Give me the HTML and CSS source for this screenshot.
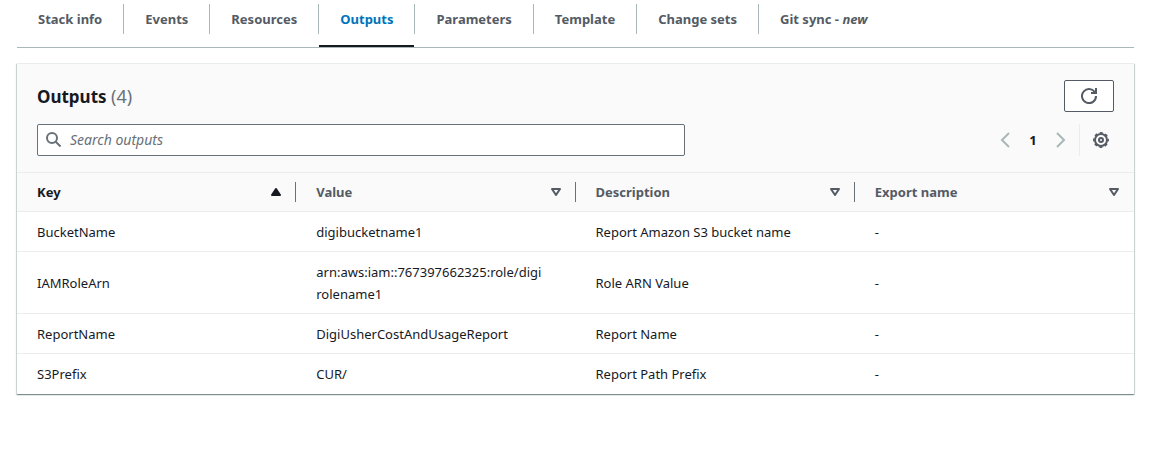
FILE: index.html
```html
<!DOCTYPE html>
<html lang="en">
<head>
<meta charset="utf-8">
<meta name="viewport" content="width=device-width, initial-scale=1">
<title>Stack outputs</title>
<link rel="stylesheet" href="styles.css">
</head>
<body>
<main class="page">
  <nav class="tabs" aria-label="Stack sections">
    <div class="tab"><a class="tab-link" href="#info">Stack info</a></div>
    <div class="tab"><a class="tab-link" href="#events">Events</a></div>
    <div class="tab"><a class="tab-link" href="#resources">Resources</a></div>
    <div class="tab tab-active"><a class="tab-link" href="#outputs" aria-current="page">Outputs</a></div>
    <div class="tab"><a class="tab-link" href="#parameters">Parameters</a></div>
    <div class="tab"><a class="tab-link" href="#template">Template</a></div>
    <div class="tab"><a class="tab-link" href="#changesets">Change sets</a></div>
    <div class="tab"><a class="tab-link" href="#gitsync">Git sync - <em>new</em></a></div>
  </nav>

  <section class="panel" id="outputs">
    <header class="panel-header">
      <div class="title-row">
        <h2 class="title">Outputs <span class="count">(4)</span></h2>
        <button class="refresh" type="button" aria-label="Refresh">
          <svg class="icon" viewBox="0 0 16 16"><path d="M10 5h5V0M15 8a7 7 0 1 1-.7-3"/></svg>
        </button>
      </div>
      <div class="tools-row">
        <label class="search">
          <svg class="icon search-icon" viewBox="0 0 16 16"><circle cx="6" cy="6" r="5"/><path d="M9.500 9.500l5 5"/></svg>
          <input class="search-input" type="search" placeholder="Search outputs" aria-label="Search outputs">
        </label>
        <div class="tools">
          <div class="pager">
            <button class="icon-button pager-arrow" type="button" aria-label="Previous page"><svg class="icon" viewBox="0 0 16 16"><path d="M12 1L5 8l7 7"/></svg></button>
            <button class="page-number" type="button" aria-current="page">1</button>
            <button class="icon-button pager-arrow" type="button" aria-label="Next page"><svg class="icon" viewBox="0 0 16 16"><path d="M4 1l7 7-7 7"/></svg></button>
          </div>
          <div class="settings">
            <button class="icon-button" type="button" aria-label="Preferences"><svg class="icon" viewBox="0 0 16 16"><circle cx="8" cy="8" r="6"/><circle class="teeth" cx="8" cy="8" r="7.200"/><circle cx="8" cy="8" r="2"/></svg></button>
          </div>
        </div>
      </div>
    </header>

    <table class="table">
      <thead>
        <tr>
          <th class="sorted" scope="col" aria-sort="ascending"><div class="head-cell">Key<svg class="sort" viewBox="0 0 10 8"><path class="solid" d="M5 1l4 6H1z"/></svg></div></th>
          <th scope="col"><div class="head-cell">Value<svg class="sort" viewBox="0 0 10 8"><path d="M1 1h8L5 7z"/></svg></div></th>
          <th scope="col"><div class="head-cell">Description<svg class="sort" viewBox="0 0 10 8"><path d="M1 1h8L5 7z"/></svg></div></th>
          <th scope="col"><div class="head-cell">Export name<svg class="sort" viewBox="0 0 10 8"><path d="M1 1h8L5 7z"/></svg></div></th>
        </tr>
      </thead>
      <tbody>
        <tr><td>BucketName</td><td>digibucketname1</td><td>Report Amazon S3 bucket name</td><td>-</td></tr>
        <tr><td>IAMRoleArn</td><td>arn:aws:iam::767397662325:role/digi<wbr>rolename1</td><td>Role ARN Value</td><td>-</td></tr>
        <tr><td>ReportName</td><td>DigiUsherCostAndUsageReport</td><td>Report Name</td><td>-</td></tr>
        <tr><td>S3Prefix</td><td>CUR/</td><td>Report Path Prefix</td><td>-</td></tr>
      </tbody>
    </table>
  </section>
</main>
</body>
</html>
```
FILE: styles.css
```css
* { box-sizing: border-box; }

body {
  margin: 0;
  background: #fff;
  color: #16191f;
  font: 13px/22px "Noto Sans", "Open Sans", sans-serif;
}

button, input { font: inherit; }

.page { padding: 0 26px 24px 17px; }

.tabs {
  display: flex;
  border-bottom: 1px solid #aab7b8;
  padding-top: 4px;
  margin-bottom: 15px;
}

.tab {
  display: flex;
  flex-direction: column;
  position: relative;
  padding-bottom: 13px;
}

.tab-link {
  padding: 4px 21px;
  border-right: 1px solid #aab7b8;
  color: #545b64;
  font-weight: 700;
  text-decoration: none;
  white-space: nowrap;
}

.tab:last-child .tab-link { border-right: 0; }
.tab-active .tab-link { color: #0073bb; }

.tab-active::after {
  content: "";
  position: absolute;
  right: 1px;
  bottom: 0;
  left: 0;
  height: 2px;
  background: #16191f;
}

.panel {
  border-top: 1px solid #eaeded;
  background: #fff;
  box-shadow: 0 1px 1px 0 rgba(0, 28, 36, .3), 1px 1px 1px 0 rgba(0, 28, 36, .15), -1px 1px 1px 0 rgba(0, 28, 36, .15);
}

.panel-header {
  display: flex;
  flex-direction: column;
  gap: 12px;
  padding: 16px 20px;
  background: #fafafa;
}

.title-row, .tools-row {
  display: flex;
  align-items: center;
  justify-content: space-between;
  gap: 20px;
}

.title { margin: 0; font-size: 17px; font-weight: 700; }
.count { color: #687078; font-size: 18px; font-weight: 400; }

.icon {
  display: block;
  width: 16px;
  height: 16px;
  fill: none;
  stroke: currentColor;
  stroke-width: 2;
}

.refresh {
  display: grid;
  place-items: center;
  width: 50px;
  height: 32px;
  padding: 0;
  border: 1px solid #545b64;
  border-radius: 2px;
  background: #fff;
  color: #545b64;
}

.search {
  display: flex;
  flex: 1;
  align-items: center;
  gap: 8px;
  max-width: 648px;
  height: 32px;
  padding: 0 8px;
  border: 1px solid #687078;
  border-radius: 2px;
  background: #fff;
  color: #687078;
}

.search-input {
  flex: 1;
  min-width: 0;
  padding: 0;
  border: 0;
  outline: 0;
  background: none;
  color: #16191f;
  font-size: 14px;
}

.search-input::placeholder { color: #687078; font-style: italic; opacity: 1; }

.tools, .pager { display: flex; align-items: center; }
.tools { gap: 10px; }

.icon-button, .page-number {
  padding: 0;
  border: 0;
  background: none;
  color: #545b64;
}

.pager-arrow { color: #aab7b8; }
.page-number { width: 40px; color: #16191f; font-weight: 700; }

.settings {
  display: flex;
  align-items: center;
  height: 32px;
  padding: 0 5px 0 13px;
  border-left: 1px solid #eaeded;
}

.teeth { stroke-width: 1.500; stroke-dasharray: 3 2.655; stroke-dashoffset: 1.500; }

.table {
  width: 100%;
  border-collapse: separate;
  border-spacing: 0;
  table-layout: fixed;
}

th {
  padding: 9px 0;
  border-top: 1px solid #eaeded;
  border-bottom: 1px solid #eaeded;
  background: #fafafa;
  color: #545b64;
  text-align: left;
}

.sorted { color: #16191f; }

.head-cell {
  display: flex;
  align-items: center;
  justify-content: space-between;
  height: 20px;
  padding: 0 14px 0 20px;
  border-right: 1px solid #687078;
}

th:last-child .head-cell { border-right-color: transparent; }

.sort {
  width: 10px;
  height: 8px;
  fill: none;
  stroke: currentColor;
  stroke-width: 2;
  stroke-linejoin: round;
}

.solid { fill: currentColor; }

td {
  padding: 9px 20px 8px;
  border-bottom: 1px solid #eaeded;
  overflow-wrap: anywhere;
}

tbody tr:last-child td { border-bottom-color: transparent; }
```
